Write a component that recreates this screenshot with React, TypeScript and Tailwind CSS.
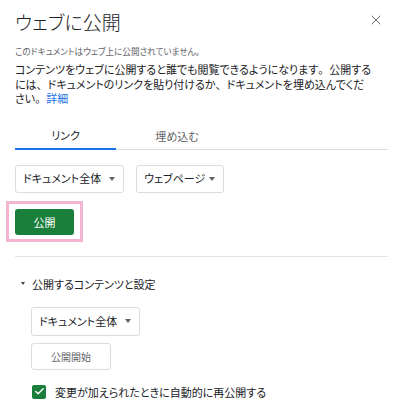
import { X, Check } from "lucide-react";

function Caret() {
  return (
    <span className="inline-block h-0 w-0 border-l-[3.5px] border-r-[3.5px] border-t-[4px] border-l-transparent border-r-transparent border-t-[#5f6368]" />
  );
}

function Dropdown({ label, width }: { label: string; width: string }) {
  return (
    <button
      className={`flex h-[28px] ${width} items-center justify-between rounded-[3px] border border-[#dadce0] bg-white pl-[7px] pr-[8px] text-[11px] text-[#202124]`}
    >
      <span>{label}</span>
      <Caret />
    </button>
  );
}

// full-width punctuation, as in the reference
function P({ c }: { c: string }) {
  return <span className="[font-feature-settings:normal]">{c}</span>;
}

export default function App() {
  return (
    <div className="h-[413px] w-[400px] overflow-hidden bg-white pl-[15px] pr-[12px] font-['Noto_Sans_CJK_JP',sans-serif] text-[#202124] [font-feature-settings:'palt']">
      <div className="flex h-[37px] items-start justify-between pt-[7px]">
        <h1 className="text-[19px] leading-[30px] font-light">ウェブに公開</h1>
        <X className="mr-[4px] mt-[5px] h-[16px] w-[16px] text-[#5f6368]" strokeWidth={1.4} />
      </div>

      <p className="mt-[7px] text-[8.6px] leading-[14px] text-[#5f6368]">
        このドキュメントはウェブ上に公開されていません<P c="。" />
      </p>

      <p className="mt-[4px] text-[11px] leading-[14.5px]">
        コンテンツをウェブに公開すると誰でも閲覧できるようになります<P c="。" />公開する
        <br />
        には<P c="、" />ドキュメントのリンクを貼り付けるか<P c="、" />ドキュメントを埋め込んでくだ
        <br />
        さい<P c="。" />
        <span className="text-[#1a73e8]">詳細</span>
      </p>

      <div className="mt-[18px] flex border-b border-[#dadce0] text-[11px]">
        <button className="-mb-px h-[26px] w-[101px] border-b-2 border-[#1a73e8] text-[#202124]">
          リンク
        </button>
        <button className="-mb-px h-[26px] w-[122px] text-[#5f6368]">埋め込む</button>
      </div>

      <div className="mt-[15px] flex gap-[12px]">
        <Dropdown label="ドキュメント全体" width="w-[109px]" />
        <Dropdown label="ウェブページ" width="w-[88px]" />
      </div>

      <div className="-ml-[9px] mt-[8px] w-fit border-[3px] border-[#f2b6d0] px-[6px] py-[4px]">
        <button className="h-[26px] w-[59px] rounded-[3px] bg-[#1b7f3c] text-[11px] text-white">
          公開
        </button>
      </div>

      <div className="mt-[14px] h-px bg-[#e3e4e6]" />

      <div className="mt-[19px] flex h-[16px] items-center text-[11px] leading-[16px]">
        <span className="ml-[6px] mr-[7px] inline-block h-0 w-0 border-l-[2.5px] border-r-[2.5px] border-t-[3px] border-l-transparent border-r-transparent border-t-[#444]" />
        公開するコンテンツと設定
      </div>

      <div className="ml-[16px] mt-[15px] flex flex-col items-start">
        <button className="flex h-[29px] w-[109px] items-center justify-between rounded-[3px] border border-[#dadce0] pl-[7px] pr-[8px] text-[11px]">
          <span>ドキュメント全体</span>
          <Caret />
        </button>
        <button className="mt-[7px] h-[27px] w-[80px] rounded-[3px] border border-[#dadce0] text-[10px] text-[#5f6368]">
          公開開始
        </button>
        <label className="mt-[14px] flex items-center">
          <span className="ml-px flex h-[14px] w-[14px] items-center justify-center rounded-[2px] bg-[#1b7f3c]">
            <Check className="h-[11px] w-[11px] text-white" strokeWidth={3} />
          </span>
          <span className="ml-[9px] text-[11px] leading-[16px]">
            変更が加えられたときに自動的に再公開する
          </span>
        </label>
      </div>
    </div>
  );
}
